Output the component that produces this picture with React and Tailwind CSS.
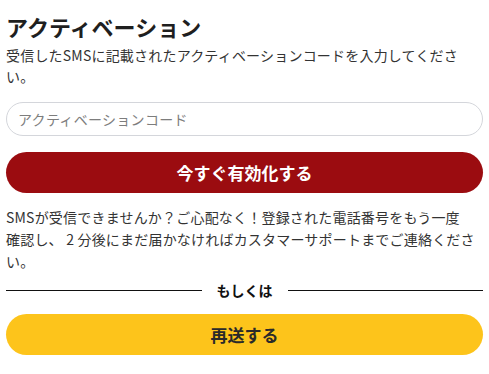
import React, { useState } from "react";

const App = () => {
  const [code, setCode] = useState("");

  return (
    <div
      className="min-h-screen bg-white px-[6px] pt-[10px] text-[#222]"
      style={{ fontFamily: '"Noto Sans CJK JP", "Noto Sans", sans-serif' }}
    >
      {/* Title */}
      <h1 className="text-[22px] font-bold leading-[32px] text-[#1f1f1f]">
        アクティベーション
      </h1>
      <p className="mt-[3px] text-[14px] leading-[21px] tracking-[0.2px] text-[#333]">
        受信したSMSに記載されたアクティベーションコードを入力してくださ
        <br />
        い。
      </p>

      {/* Code input */}
      <input
        type="text"
        value={code}
        onChange={(e) => setCode(e.target.value)}
        placeholder="アクティベーションコード"
        className="mt-[15px] block h-[34px] w-full rounded-full border border-[#d4d6db] px-[11px] text-[14px] tracking-[0.3px] placeholder:text-[#7d7d7d] focus:outline-none"
      />

      {/* Activate */}
      <button className="mt-[16px] flex h-[41px] w-full items-center justify-center rounded-full bg-[#9b0c10] text-[17px] font-bold text-white">
        今すぐ有効化する
      </button>

      <p className="mt-[13px] text-[14px] leading-[22px] tracking-[0.2px] text-[#333]">
        SMSが受信できませんか？ご心配なく！登録された電話番号をもう一度
        <br />
        確認し、 2 分後にまだ届かなければカスタマーサポートまでご連絡くださ
        <br />
        い。
      </p>

      {/* Divider */}
      <div className="mt-[8px] flex h-[20px] items-center gap-[15px]">
        <div className="h-px flex-1 bg-[#111]" />
        <span className="text-[14px] font-semibold text-[#111]">もしくは</span>
        <div className="h-px flex-1 bg-[#111]" />
      </div>

      {/* Resend */}
      <button className="mt-[14px] flex h-[41px] w-full items-center justify-center rounded-full bg-[#fdc41b] text-[17px] font-bold text-[#2a2a2a]">
        再送する
      </button>
    </div>
  );
};

export default App;
